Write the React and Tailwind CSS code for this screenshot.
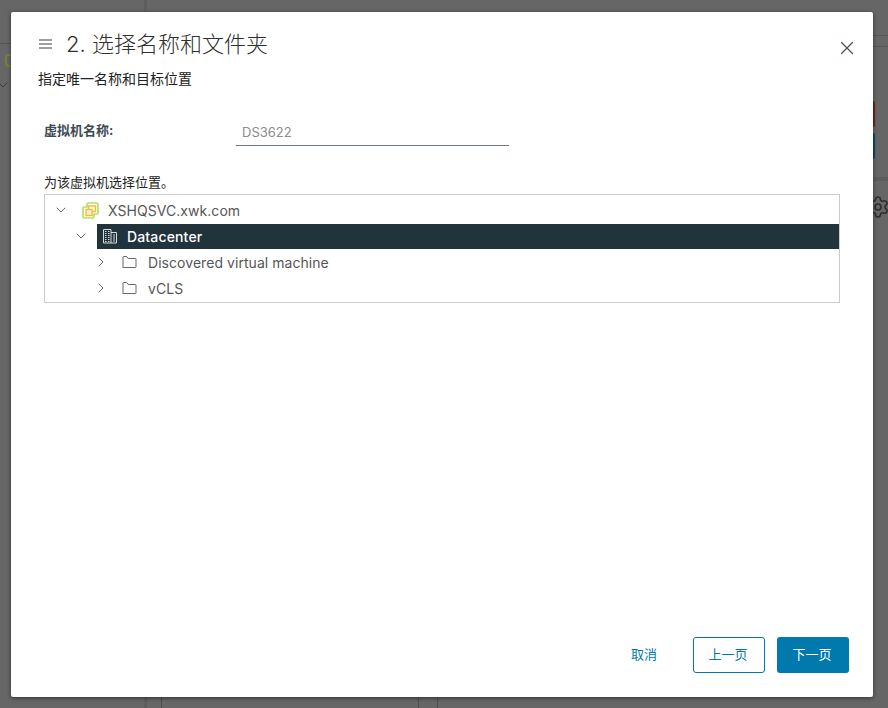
import React from "react";
import { ChevronDown, ChevronRight, Settings, X } from "lucide-react";

const font = {
  fontFamily: '"Inter", "Noto Sans CJK SC", sans-serif',
};

// vCenter logo, two interlocked squares
const VcenterIcon = () => (
  <svg width="17" height="17" viewBox="0 0 17 17" fill="none">
    <path d="M6.5 1h8a1.5 1.5 0 0 1 1.5 1.5v8a1.5 1.5 0 0 1-1.5 1.5H12v2.5a1.5 1.5 0 0 1-1.5 1.5h-8A1.5 1.5 0 0 1 1 14.5v-8A1.5 1.5 0 0 1 2.500 5H5V2.500A1.5 1.500 0 0 1 6.500 1z" stroke="#b9dc6e" strokeWidth="1.7" />
    <path d="M6.500 8V4h7v5.500h-4" stroke="#f2bd30" strokeWidth="1.4" />
    <path d="M4 7.500h6V13.500H4z" stroke="#f2bd30" strokeWidth="1.400" fill="#fff6d8" />
  </svg>
);

const BuildingIcon = () => (
  <svg width="16" height="16" viewBox="0 0 16 16" fill="none" stroke="#d5dadc" strokeWidth="1">
    <path d="M1.500 1.500h7.500V15H1.500z" />
    <path d="M9 4.500h5.500V15H9" />
    <path d="M3 3.500h1.500M6 3.500h1.500M3 5.500h1.500M6 5.500h1.500M3 7.500h1.500M6 7.500h1.500M3 9.500h1.500M6 9.500h1.500M3 11.500h1.500M6 11.500h1.500M3 13.500h1.500M6 13.500h1.500M11 7h2M11 9h2M11 11h2M11 13h2" />
  </svg>
);

const FolderIcon = () => (
  <svg width="15" height="14" viewBox="0 0 15 14" fill="none" stroke="#666666" strokeWidth="1">
    <path d="M1 12.500V2a.5.5 0 0 1 .5-.5h3.200l1.500 2h7.300a.5.5 0 0 1 .5.5v8a.5.5 0 0 1-.5.5h-12a.5.5 0 0 1-.5-.5z" />
  </svg>
);

const TreeRow = ({ indent, open, icon, label, selected }) => {
  const Chevron = open ? ChevronDown : ChevronRight;
  return (
    <div className="flex h-[26px] items-center" style={{ paddingLeft: indent }}>
      <Chevron size={16} strokeWidth={1.4} className="ml-[1px] mr-[8px] shrink-0 text-[#5c5c5c]" />
      {selected ? (
        <div className="flex h-[25px] flex-1 items-center bg-[#21333b] pl-[5px] text-white">
          <span className="flex w-[25px] shrink-0 items-center">{icon}</span>
          <span className="text-[14px] font-medium tracking-[0.15px]">{label}</span>
        </div>
      ) : (
        <div className="flex flex-1 items-center pl-[5px] text-[#565656]">
          <span className="flex w-[26px] shrink-0 items-center">{icon}</span>
          <span className="text-[14px] tracking-[0.05px]">{label}</span>
        </div>
      )}
    </div>
  );
};

const App = () => {
  return (
    <div className="relative h-[708px] w-[888px] overflow-hidden bg-[#666666]" style={font}>
      {/* dimmed page behind the dialog */}
      <div className="absolute left-[144px] top-0 h-full w-[3px] bg-[#5e5e5e]" />
      <div className="absolute bottom-0 left-[161px] h-[12px] w-px bg-[#4e4e4e]" />
      <div className="absolute bottom-0 left-[418px] h-[12px] w-px bg-[#4e4e4e]" />
      <div className="absolute bottom-0 left-[437px] h-[12px] w-px bg-[#4e4e4e]" />
      <div className="absolute left-0 top-[43px] h-px w-[11px] bg-[#555555]" />
      <div className="absolute right-0 top-[35px] h-px w-[15px] bg-[#575757]" />
      <div className="absolute right-0 top-[46px] h-px w-[15px] bg-[#575757]" />
      <div className="absolute right-0 top-[177px] h-[4px] w-[15px] bg-[#5c5c5c]" />
      <div className="absolute left-[873px] top-[101px] h-[26px] w-[2px] rounded-r-sm bg-[#7a1f14]" />
      <div className="absolute left-[873px] top-[133px] h-[26px] w-[2px] rounded-r-sm bg-[#0b4a68]" />
      <Settings size={24} strokeWidth={1.6} className="absolute left-[866px] top-[195px] text-[#2e2e2e]" />
      <div className="absolute left-[5px] top-[54px] h-[13px] w-[13px] rounded-sm border-2 border-[#74813f]" />
      <ChevronDown size={16} strokeWidth={1.4} className="absolute left-[-5px] top-[77px] text-[#3a3a3a]" />

      {/* dialog */}
      <div className="relative ml-[11px] mt-[12px] flex h-[685px] w-[862px] flex-col rounded-[2px] bg-white pl-[27px] pr-[24px] shadow-[0_1px_4px_rgba(0,0,0,0.5)]">
        <div className="mt-[16px] flex h-[32px] items-center">
          <svg width="14" height="10" viewBox="0 0 14 10" fill="none" stroke="#3f3f3f" strokeWidth="1.2" className="ml-[1px] shrink-0">
            <path d="M0 1h13M0 5h13M0 9h13" />
          </svg>
          <h1 className="ml-[13px] text-[22px] font-light leading-[32px] text-[#2f2f2f]">2. 选择名称和文件夹</h1>
          <X size={22} strokeWidth={1.3} className="ml-auto mt-[7px] mr-[-9px] text-[#46565f]" />
        </div>
        <p className="mt-[9px] text-[14px] leading-[20px] text-[#222222]">指定唯一名称和目标位置</p>

        <div className="ml-[6px] mt-[30px] flex h-[37px] items-start">
          <label className="mt-[1px] w-[192px] text-[13px] font-bold leading-[20px] text-[#3c4a52]">虚拟机名称:</label>
          <div className="h-[27px] w-[273px] border-b border-[#6c7880] pl-[6px] pt-[3px] text-[13px] leading-[20px] text-[#8c8c8c]">DS3622</div>
        </div>

        <p className="ml-[6px] mt-[16px] text-[13px] leading-[20px] text-[#222222]">为该虚拟机选择位置。</p>
        <div className="ml-[6px] mt-[2px] h-[109px] w-[796px] border border-[#cccccc] pt-[2px]">
          <TreeRow indent={7} open icon={<VcenterIcon />} label="XSHQSVC.xwk.com" />
          <TreeRow indent={27} open selected icon={<BuildingIcon />} label="Datacenter" />
          <TreeRow indent={47} icon={<FolderIcon />} label="Discovered virtual machine" />
          <TreeRow indent={47} icon={<FolderIcon />} label="vCLS" />
        </div>

        <div className="mb-[24px] mt-auto flex items-center justify-end gap-[12px]">
          <button className="mr-[24px] h-[36px] text-[13px] text-[#0079ad]">取消</button>
          <button className="h-[36px] w-[72px] rounded-[3px] border border-[#0079ad] bg-white pr-[2px] text-[13px] text-[#0079ad]">上一页</button>
          <button className="h-[36px] w-[72px] rounded-[3px] bg-[#0079ad] pr-[2px] text-[13px] text-white">下一页</button>
        </div>
      </div>
    </div>
  );
};

export default App;
